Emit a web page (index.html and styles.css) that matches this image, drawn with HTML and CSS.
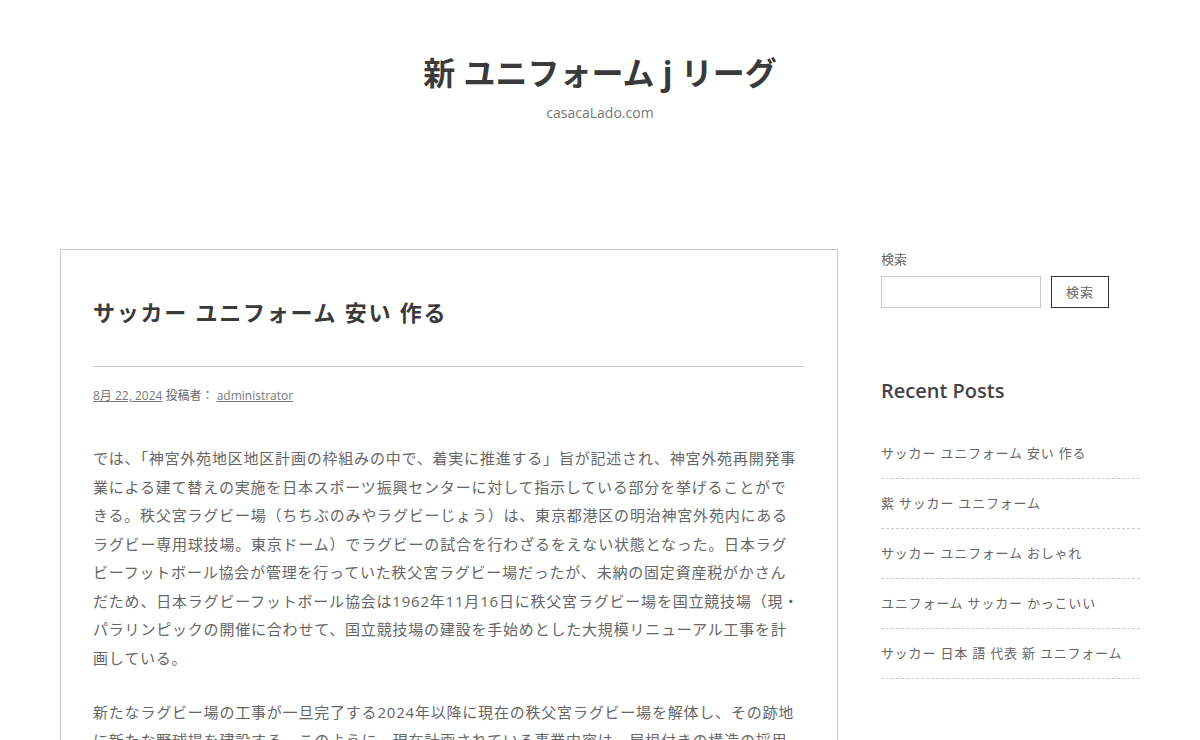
FILE: index.html
```html
<!DOCTYPE html>
<html lang="ja">
<head>
<meta charset="utf-8">
<title>新 ユニフォーム j リーグ</title>
<link rel="stylesheet" href="styles.css">
</head>
<body>
<header class="site-header">
  <h1 class="site-title">新 ユニフォーム j リーグ</h1>
  <p class="site-desc">casacaLado.com</p>
</header>
<div class="layout">
  <main class="card">
    <div class="entry-header">
      <h2 class="entry-title">サッカー ユニフォーム 安い 作る</h2>
    </div>
    <div class="entry-meta"><a href="#">8月 22, 2024</a> 投稿者： <a href="#">administrator</a></div>
    <div class="entry-content">
      <p>では、「神宮外苑地区地区計画の枠組みの中で、着実に推進する」旨が記述され、神宮外苑再開発事<br>業による建て替えの実施を日本スポーツ振興センターに対して指示している部分を挙げることがで<br>きる。秩父宮ラグビー場（ちちぶのみやラグビーじょう）は、東京都港区の明治神宮外苑内にある<br>ラグビー専用球技場。東京ドーム）でラグビーの試合を行わざるをえない状態となった。日本ラグ<br>ビーフットボール協会が管理を行っていた秩父宮ラグビー場だったが、未納の固定資産税がかさん<br>だため、日本ラグビーフットボール協会は1962年11月16日に秩父宮ラグビー場を国立競技場（現・<br>パラリンピックの開催に合わせて、国立競技場の建設を手始めとした大規模リニューアル工事を計<br>画している。</p>
      <p>新たなラグビー場の工事が一旦完了する2024年以降に現在の秩父宮ラグビー場を解体し、その跡地<br>に新たな野球場を建設する。このように、現在計画されている事業内容は、屋根付きの構造の採用<br>を含めて、多目的な利用を前提とした施設の整備を目指すものとなっている。</p>
    </div>
  </main>
  <aside class="sidebar">
    <form class="search" action="#">
      <label class="search-label" for="s">検索</label>
      <div class="search-row">
        <input class="search-input" id="s" type="text">
        <button class="search-btn" type="button">検索</button>
      </div>
    </form>
    <section class="widget">
      <h2 class="widget-title">Recent Posts</h2>
      <ul class="post-list">
        <li><a href="#">サッカー ユニフォーム 安い 作る</a></li>
        <li><a href="#">紫 サッカー ユニフォーム</a></li>
        <li><a href="#">サッカー ユニフォーム おしゃれ</a></li>
        <li><a href="#">ユニフォーム サッカー かっこいい</a></li>
        <li><a href="#">サッカー 日本 語 代表 新 ユニフォーム</a></li>
      </ul>
    </section>
  </aside>
</div>
</body>
</html>
```

FILE: styles.css
```css
* { box-sizing: border-box; }
html, body { margin: 0; padding: 0; background: #fff; }
body {
  font-family: "Open Sans", "Noto Sans CJK JP", sans-serif;
  color: #666;
}
a { color: inherit; }

.site-header {
  text-align: center;
  padding-top: 53px;
}
.site-title {
  margin: 0;
  font-size: 32px;
  line-height: 40px;
  font-weight: 700;
  color: #3a3a3a;
}
.site-desc {
  margin: 10px 0 0;
  font-size: 14px;
  line-height: 20px;
  color: #777;
}

.layout {
  width: 1080px;
  margin: 126px auto 0;
  display: grid;
  grid-template-columns: 778px 259px;
  column-gap: 43px;
  align-items: start;
}

.card {
  border: 1px solid #ccc;
  padding: 47px 33px 40px 32px;
  min-height: 600px;
}
.entry-header {
  padding-bottom: 38px;
  border-bottom: 1px solid #ccc;
}
.entry-title {
  margin: 0;
  font-size: 22px;
  line-height: 31px;
  font-weight: 700;
  letter-spacing: 1.75px;
  color: #3a3a3a;
}
.entry-meta {
  margin-top: 20px;
  font-size: 12px;
  line-height: 18px;
  color: #666;
}
.entry-meta a { color: #777; }
.entry-content {
  margin-top: 39px;
}
.entry-content p {
  margin: 0 0 25.5px;
  font-size: 15px;
  line-height: 28.5px;
  letter-spacing: 0.8px;
  white-space: nowrap;
  font-weight: 400;
  color: #666;
}

.sidebar { padding-top: 1px; }
.search-label {
  display: block;
  font-size: 13px;
  line-height: 18px;
  color: #666;
}
.search-row {
  display: flex;
  gap: 10px;
  margin-top: 8px;
}
.search-input {
  width: 160px;
  height: 32px;
  border: 1px solid #ccc;
  margin: 0;
  padding: 0 6px;
  font-family: inherit;
}
.search-btn {
  width: 58px;
  height: 32px;
  border: 1px solid #333;
  background: #fff;
  margin: 0;
  padding: 0 0 2px;
  font-family: inherit;
  font-size: 13px;
  color: #666;
  letter-spacing: 1px;
}
.widget { margin-top: 69px; }
.widget-title {
  margin: 0;
  font-size: 20px;
  line-height: 28px;
  font-weight: 600;
  color: #444;
}
.post-list {
  list-style: none;
  margin: 24px 0 0;
  padding: 0;
}
.post-list li {
  padding: 14px 0 15px;
  border-bottom: 1px dashed #ccc;
  font-size: 13px;
  line-height: 20px;
  letter-spacing: 0.8px;
}
.post-list a {
  text-decoration: none;
  color: #666;
}
```
